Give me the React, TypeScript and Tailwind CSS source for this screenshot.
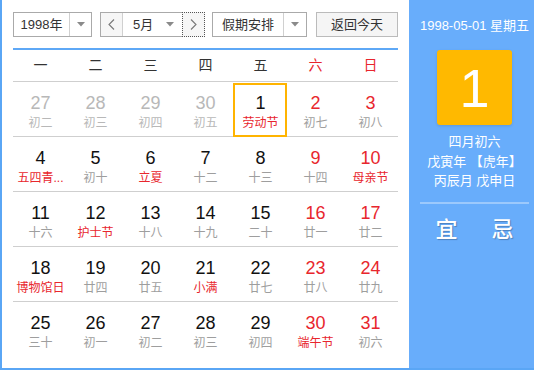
import React from "react";

type Cell = { d: string; l: string; numColor: string; lunColor: string; sel?: boolean };

const GRAY_OTHER = "text-[#b8b8b8]";
const BLACK = "text-[#111]";
const RED = "text-[#e8262d]";
const LGRAY = "text-[#9e9e9e]";

const mk = (d: string, l: string, kind: "other" | "wd" | "we", fest = false, sel = false): Cell => ({
  d,
  l,
  numColor: kind === "other" ? GRAY_OTHER : kind === "we" ? RED : BLACK,
  lunColor: kind === "other" ? GRAY_OTHER : fest ? RED : LGRAY,
  sel,
});

const rows: Cell[][] = [
  [mk("27", "初二", "other"), mk("28", "初三", "other"), mk("29", "初四", "other"), mk("30", "初五", "other"), mk("1", "劳动节", "wd", true, true), mk("2", "初七", "we"), mk("3", "初八", "we")],
  [mk("4", "五四青...", "wd", true), mk("5", "初十", "wd"), mk("6", "立夏", "wd", true), mk("7", "十二", "wd"), mk("8", "十三", "wd"), mk("9", "十四", "we"), mk("10", "母亲节", "we", true)],
  [mk("11", "十六", "wd"), mk("12", "护士节", "wd", true), mk("13", "十八", "wd"), mk("14", "十九", "wd"), mk("15", "二十", "wd"), mk("16", "廿一", "we"), mk("17", "廿二", "we")],
  [mk("18", "博物馆日", "wd", true), mk("19", "廿四", "wd"), mk("20", "廿五", "wd"), mk("21", "小满", "wd", true), mk("22", "廿七", "wd"), mk("23", "廿八", "we"), mk("24", "廿九", "we")],
  [mk("25", "三十", "wd"), mk("26", "初一", "wd"), mk("27", "初二", "wd"), mk("28", "初三", "wd"), mk("29", "初四", "wd"), mk("30", "端午节", "we", true), mk("31", "初六", "we")],
];

const week = ["一", "二", "三", "四", "五", "六", "日"];

function Arrow() {
  return (
    <svg width="8" height="5" viewBox="0 0 8 5">
      <path d="M0 0 L8 0 L4 4.5 Z" fill="#8a8a8a" />
    </svg>
  );
}

function Chevron({ dir }: { dir: "l" | "r" }) {
  return (
    <svg width="7" height="11" viewBox="0 0 7 11">
      {dir === "l" ? (
        <polyline points="6,0.5 1,5.5 6,10.5" fill="none" stroke="#777" strokeWidth="1.1" />
      ) : (
        <polyline points="1,0.5 6,5.5 1,10.5" fill="none" stroke="#777" strokeWidth="1.1" />
      )}
    </svg>
  );
}

export default function App() {
  return (
    <div
      className="w-[534px] h-[371px] bg-white overflow-hidden"
      style={{ fontFamily: '"Liberation Sans", Arial, "Noto Sans CJK SC", sans-serif' }}
    >
      <div className="flex h-[370px] border-l-2 border-b-2 border-[#5aa6f5]">
        {/* Left panel */}
        <div className="w-[407px] pl-[11px] pt-[12px]">
          {/* Controls */}
          <div className="flex h-[25px] text-[13px] text-[#333]">
            <div className="flex w-[79px] border border-[#aaa] bg-white">
              <div className="flex w-[55px] items-center justify-center">1998年</div>
              <div className="flex flex-1 items-center justify-center border-l border-[#d0d0d0]">
                <Arrow />
              </div>
            </div>
            <div className="ml-[8px] flex w-[105px] border border-[#aaa] bg-white">
              <div className="flex w-[22px] items-center justify-center border-r border-[#d0d0d0] bg-[#f6f6f6]">
                <Chevron dir="l" />
              </div>
              <div className="flex flex-1 items-center justify-between pl-[10px] pr-[8px]">
                <span>5月</span>
                <Arrow />
              </div>
              <div className="flex w-[23px] items-center justify-center border border-dotted border-[#555] bg-[#f6f6f6] -my-px -mr-px">
                <Chevron dir="r" />
              </div>
            </div>
            <div className="ml-[7px] flex w-[95px] border border-[#aaa] bg-white">
              <div className="flex w-[70px] items-center justify-center">假期安排</div>
              <div className="flex flex-1 items-center justify-center border-l border-[#d0d0d0]">
                <Arrow />
              </div>
            </div>
            <div className="ml-[9px] flex w-[82px] items-center justify-center border border-[#bbb] bg-[#f5f5f5]">
              返回今天
            </div>
          </div>

          {/* blue line */}
          <div className="mt-[11px] h-[2px] w-[385px] bg-[#5ea8f6]" />

          {/* week header */}
          <div className="grid h-[32px] w-[385px] grid-cols-7 items-center border-b border-[#cfcfcf] text-[14px]">
            {week.map((w, i) => (
              <div key={w} className={`text-center ${i >= 5 ? "text-[#e8262d]" : "text-[#333]"}`}>
                {w}
              </div>
            ))}
          </div>

          {/* rows */}
          {rows.map((r, ri) => (
            <div
              key={ri}
              className={`grid h-[55px] w-[385px] grid-cols-7 ${ri < rows.length - 1 ? "border-b border-[#cfcfcf]" : ""}`}
            >
              {r.map((c, ci) => (
                <div key={ci} className="relative flex flex-col items-center pt-[10px]">
                  {c.sel && (
                    <div className="absolute left-0 right-[1px] top-[1px] bottom-[-1px] border-2 border-[#ffb400]" />
                  )}
                  <div className={`text-[18px] leading-[22px] ${c.numColor}`}>{c.d}</div>
                  <div className={`mt-[1px] whitespace-nowrap text-[12px] leading-[16px] ${c.lunColor}`}>{c.l}</div>
                </div>
              ))}
            </div>
          ))}
        </div>

        {/* Right panel */}
        <div className="flex flex-1 flex-col items-center bg-[#68adfb] pl-[6px] text-white">
          <div className="pt-[17px] text-[13px] leading-[18px]">1998-05-01 星期五</div>
          <div className="mt-[15px] flex h-[75px] w-[75px] items-center justify-center rounded-[3px] bg-[#ffb900] text-[54px] leading-none shadow-[0_1px_3px_rgba(0,0,0,0.12)]">
            1
          </div>
          <div className="mt-[7px] text-center text-[13px] leading-[19.5px]">
            <div>四月初六</div>
            <div>戊寅年 【虎年】</div>
            <div>丙辰月 戊申日</div>
          </div>
          <div className="mt-[11px] h-[2px] w-[109px] bg-white/35" />
          <div className="mt-[11px] flex w-[78px] justify-between text-[22px] leading-[30px] font-medium [text-shadow:1px_1px_1px_rgba(0,0,0,0.25)]">
            <span>宜</span>
            <span>忌</span>
          </div>
        </div>
      </div>
    </div>
  );
}
